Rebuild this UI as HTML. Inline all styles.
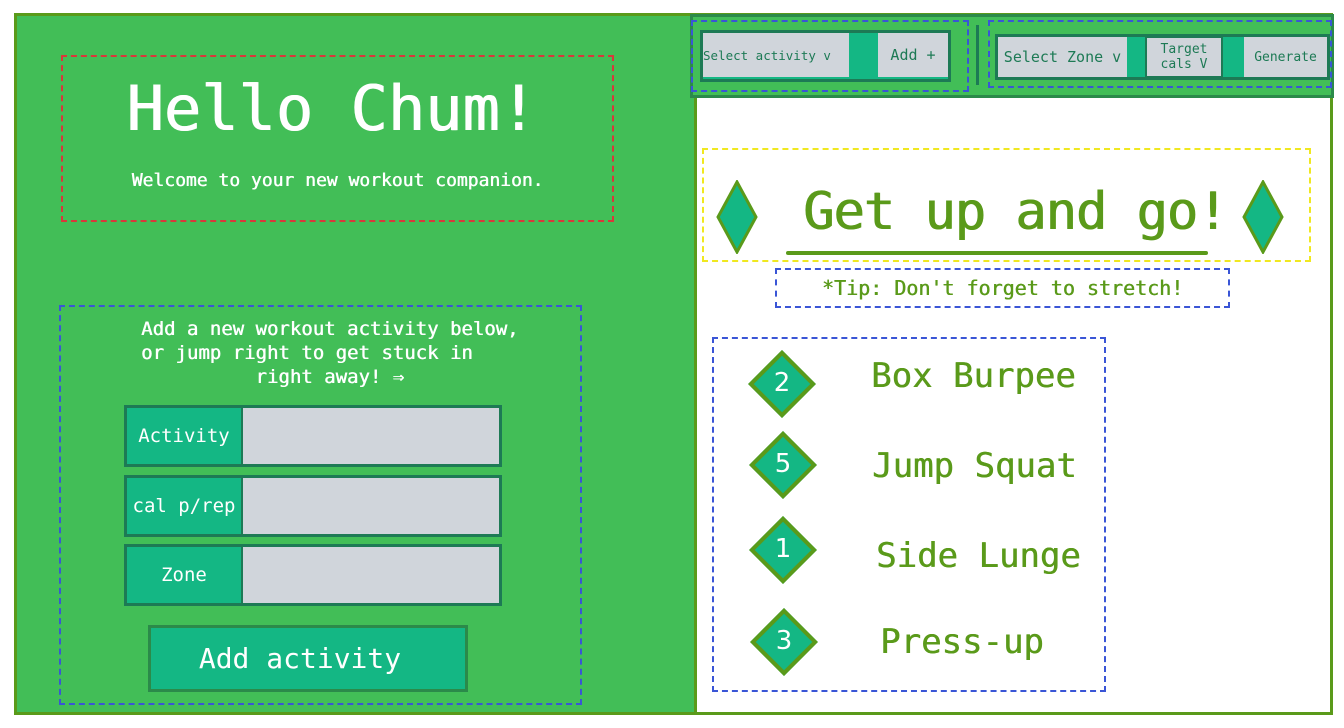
<!DOCTYPE html>
<html><head><style>
*{margin:0;padding:0;box-sizing:border-box}
body{width:1344px;height:728px;background:#fff;position:relative;overflow:hidden;font-family:"DejaVu Sans Mono","Liberation Mono",monospace}
.a{position:absolute}
.dash{position:absolute;border:2px dashed}
.lbl{position:absolute;background:#14b784;border:3px solid #1d7a55;color:#fff;font-size:19px;display:flex;align-items:center;justify-content:center}
.inp{position:absolute;background:#d0d5db;border:3px solid #1d7a55;border-left:none}
.tb{position:absolute;background:#d0d5db;color:#1d7a55;font-size:13px;display:flex;align-items:center;justify-content:center;text-align:center;line-height:15px}
.dia{position:absolute;width:48px;height:48px;background:#14b784;border:4px solid #5a9a1a;transform:rotate(45deg)}
.num{position:absolute;color:#fff;font-size:26px;width:40px;text-align:center;font-family:"DejaVu Sans",sans-serif}
.item{position:absolute;color:#5a9a1a;font-size:34px;text-shadow:0.5px 0 0 #5a9a1a}
</style></head><body>
<div class="a" style="left:14px;top:13px;width:1319px;height:702px;border:3px solid #5a9a1a"></div>
<div class="a" style="left:17px;top:16px;width:678px;height:696px;background:#42be57"></div>
<div class="a" style="left:694px;top:16px;width:3px;height:696px;background:#5a9a1a"></div>
<!-- left -->
<div class="dash" style="left:61px;top:55px;width:553px;height:167px;border-color:#d9383a"></div>
<div class="a" style="left:55px;top:72px;width:553px;text-align:center;color:#fff;font-size:62px;text-shadow:1px 0 0 #fff">Hello Chum!</div>
<div class="a" style="left:61px;top:170px;width:553px;text-align:center;color:#fff;font-size:18px;text-shadow:0.5px 0 0 #fff">Welcome to your new workout companion.</div>
<div class="dash" style="left:59px;top:305px;width:523px;height:400px;border-color:#3a55d6"></div>
<div class="a" style="left:141px;top:317px;color:#fff;font-size:19px;line-height:24px;white-space:pre;text-shadow:0.5px 0 0 #fff">Add a new workout activity below,
or jump right to get stuck in
          right away! ⇒</div>
<div class="lbl" style="left:124px;top:405px;width:120px;height:62px">Activity</div>
<div class="inp" style="left:243px;top:405px;width:259px;height:62px"></div>
<div class="lbl" style="left:124px;top:475px;width:120px;height:62px">cal p/rep</div>
<div class="inp" style="left:243px;top:475px;width:259px;height:62px"></div>
<div class="lbl" style="left:124px;top:544px;width:120px;height:62px">Zone</div>
<div class="inp" style="left:243px;top:544px;width:259px;height:62px"></div>
<div class="lbl" style="left:148px;top:625px;width:320px;height:67px;font-size:28px;border-color:#2b8a4a;padding-right:16px">Add activity</div>
<!-- top bar -->
<div class="a" style="left:690px;top:14px;width:644px;height:84px;background:#42be57;border:3px solid #2b8a4a"></div>
<div class="dash" style="left:691px;top:20px;width:278px;height:72px;border-color:#3a55d6"></div>
<div class="dash" style="left:988px;top:20px;width:344px;height:68px;border-color:#3a55d6"></div>
<div class="a" style="left:976px;top:25px;width:3px;height:60px;background:#1d7a55"></div>
<div class="a" style="left:700px;top:30px;width:251px;height:52px;background:#14b784;border:3px solid #1d7a55"></div>
<div class="tb" style="left:703px;top:33px;width:146px;height:44px;justify-content:flex-start;font-size:12.5px">Select activity v</div>
<div class="tb" style="left:878px;top:33px;width:70px;height:44px;font-size:15px">Add +</div>
<div class="a" style="left:995px;top:34px;width:335px;height:46px;background:#14b784;border:3px solid #1d7a55"></div>
<div class="tb" style="left:998px;top:37px;width:129px;height:40px;font-size:15px">Select Zone v</div>
<div class="tb" style="left:1145px;top:36px;width:78px;height:42px;border:2px solid #1d7a55">Target<br>cals V</div>
<div class="tb" style="left:1244px;top:37px;width:83px;height:40px">Generate</div>
<!-- right -->
<div class="dash" style="left:702px;top:148px;width:609px;height:114px;border-color:#f0e820"></div>
<div class="a" style="left:716px;top:180px;width:42px;height:74px"><svg width="42" height="74"><polygon points="21,2 40,37 21,72 2,37" fill="#14b784" stroke="#5a9a1a" stroke-width="3"/></svg></div>
<div class="a" style="left:1242px;top:180px;width:42px;height:74px"><svg width="42" height="74"><polygon points="21,2 40,37 21,72 2,37" fill="#14b784" stroke="#5a9a1a" stroke-width="3"/></svg></div>
<div class="a" style="left:775px;top:182px;width:480px;text-align:center;color:#5a9a1a;font-size:52px;letter-spacing:-1px;text-shadow:1px 0 0 #5a9a1a">Get up and go!</div>
<div class="a" style="left:786px;top:251px;width:422px;height:4px;background:#5a9a1a;border-radius:2px"></div>
<div class="dash" style="left:775px;top:268px;width:455px;height:40px;border-color:#3a55d6"></div>
<div class="a" style="left:775px;top:276px;width:455px;text-align:center;color:#5a9a1a;font-size:20px;text-shadow:0.5px 0 0 #5a9a1a">*Tip: Don't forget to stretch!</div>
<div class="dash" style="left:712px;top:337px;width:394px;height:355px;border-color:#3a55d6"></div>
<div class="dia" style="left:758px;top:360px"></div><div class="num" style="left:762px;top:368px">2</div>
<div class="dia" style="left:759px;top:441px"></div><div class="num" style="left:763px;top:449px">5</div>
<div class="dia" style="left:759px;top:526px"></div><div class="num" style="left:763px;top:534px">1</div>
<div class="dia" style="left:760px;top:618px"></div><div class="num" style="left:764px;top:626px">3</div>
<div class="item" style="left:871px;top:356px">Box Burpee</div>
<div class="item" style="left:872px;top:446px">Jump Squat</div>
<div class="item" style="left:876px;top:536px">Side Lunge</div>
<div class="item" style="left:880px;top:622px">Press-up</div>
</body></html>
